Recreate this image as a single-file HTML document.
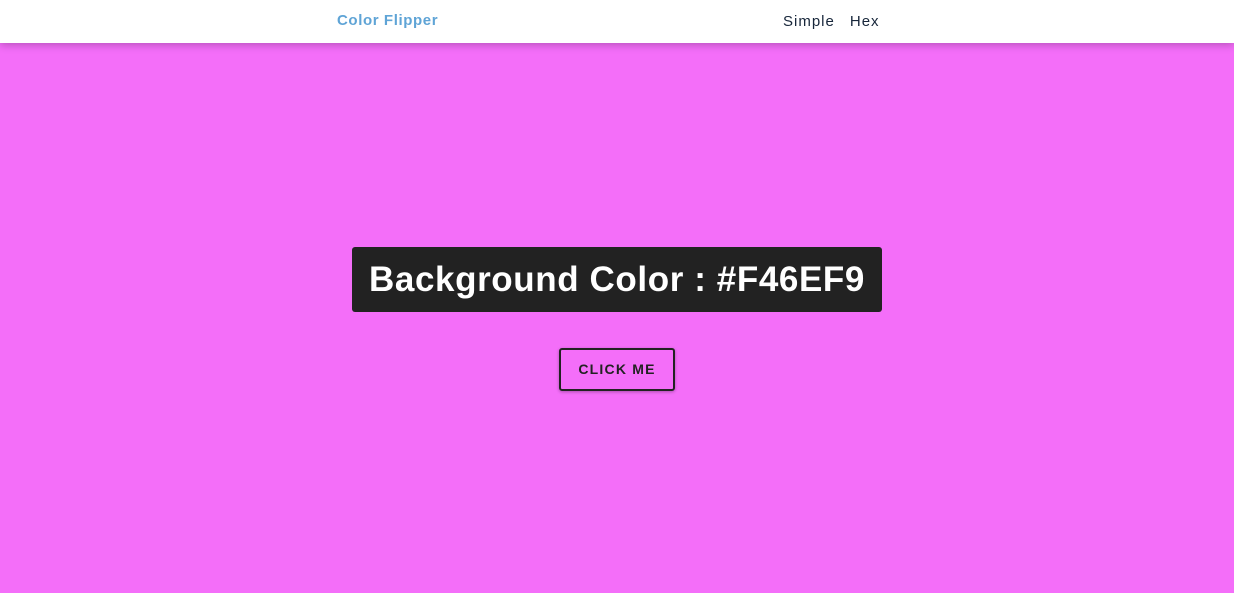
<!DOCTYPE html>
<html><head><style>
html,body{margin:0;padding:0;width:1234px;height:593px;overflow:hidden;background:#F46EF9;font-family:"Liberation Sans",sans-serif;}
nav{position:absolute;left:0;top:0;width:1234px;height:43px;background:#fff;box-shadow:0 2px 8px rgba(0,0,0,0.25);}
.logo{position:absolute;left:337px;top:12px;font-size:15px;font-weight:bold;color:#5fa4d6;letter-spacing:0.6px;}
.links{position:absolute;left:783px;top:13px;font-size:15px;color:#17263a;letter-spacing:1px;}
.links span{margin-right:15px;}
.box{position:absolute;left:352px;top:247px;width:530px;height:65px;background:#222;border-radius:3px;color:#fff;font-weight:bold;font-size:35px;text-align:center;line-height:65px;letter-spacing:0.6px;}
.btn{position:absolute;left:559px;top:348px;height:39px;border:2px solid #222;border-radius:3px;box-sizing:content-box;width:112px;color:#222;font-weight:bold;font-size:14px;letter-spacing:1.2px;text-align:center;line-height:39px;box-shadow:0 1px 3px rgba(0,0,0,0.3);}
</style></head><body>
<nav><div class="logo">Color Flipper</div><div class="links"><span>Simple</span>Hex</div></nav>
<div class="box">Background Color : #F46EF9</div>
<div class="btn">CLICK ME</div>
</body></html>
